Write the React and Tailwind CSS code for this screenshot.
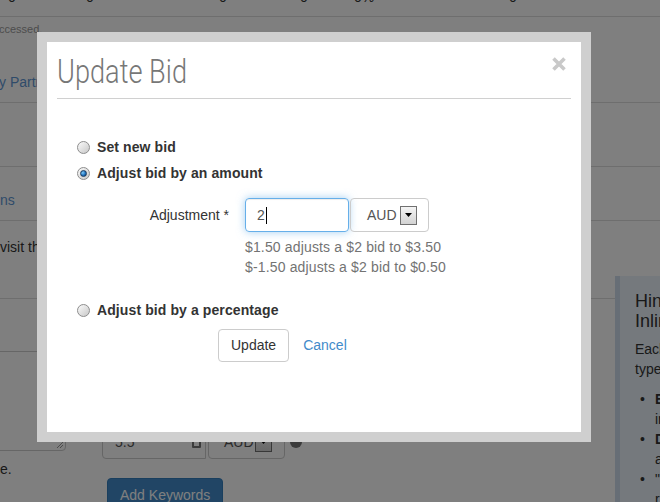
import React from 'react';

const Radio = ({ checked }) => (
    <span className="flex h-[13px] w-[13px] shrink-0 items-center justify-center rounded-full border border-[#8d8d8d] bg-linear-to-br from-[#fbfbfb] to-[#c8c8c8]">
        {checked && (
            <span className="h-[7px] w-[7px] rounded-full border border-[#1c3c5e] bg-[radial-gradient(circle_at_35%_35%,#7cc8f7,#1a6bb8_60%,#0c3a6a)]" />
        )}
    </span>
)

const RadioRow = ({ checked, label }) => (
    <div className="flex h-[26px] items-center gap-[7px]">
        <Radio checked={checked} />
        <span className="font-bold tracking-[0.1px] text-[#333]">{label}</span>
    </div>
)

const DropArrow = () => (
    <span className="flex h-[19px] w-[17px] items-center justify-center border border-[#707070] bg-linear-to-b from-[#f4f4f4] to-[#d3d3d3]">
        <svg width="7" height="4" viewBox="0 0 7 4">
            <path d="M0 0h7L3.5 4z" fill="#000" />
        </svg>
    </span>
)

const UpdateBidModal = () => (
    <div className="absolute left-[37px] top-[32px] h-[410px] w-[554px] bg-[#cfcfcf] p-[10px]">
        <div className="h-full bg-white px-[10px]">
            <div className="flex items-start justify-between border-b border-[#d0d0d0] pb-[7px] pt-[9px]">
                <h4 className="origin-left scale-x-[0.8] whitespace-nowrap font-['Roboto',sans-serif] text-[34px] font-light leading-[40px] text-[#777]">
                    Update Bid
                </h4>
                <svg className="mr-[5px] mt-[6px]" width="14" height="14" viewBox="0 0 14 14">
                    <path d="M1.5 1.5L12.5 12.5M12.5 1.5L1.5 12.5" stroke="#c9c9c9" strokeWidth="3.6" />
                </svg>
            </div>

            <div className="pl-[20px] pt-[35px]">
                <RadioRow label="Set new bid" />
                <RadioRow checked label="Adjust bid by an amount" />

                <div className="mt-[12px] flex items-center">
                    <label className="w-[152px] text-right text-[#333]">Adjustment *</label>
                    <div className="ml-[16px] flex h-[34px] w-[104px] items-center rounded-[4px] border border-[#66afe9] pl-[11px] text-[#555] shadow-[inset_0_1px_1px_rgba(0,0,0,0.075),0_0_8px_rgba(102,175,233,0.6)]">
                        <span>2</span>
                        <span className="ml-[1px] h-[17px] w-[1px] bg-black" />
                    </div>
                    <div className="ml-[1px] flex h-[34px] w-[79px] items-center gap-[3px] rounded-[4px] border border-[#ccc] pl-[16px] text-[#555]">
                        <span>AUD</span>
                        <DropArrow />
                    </div>
                </div>

                <div className="ml-[168px] mt-[5px] leading-[20px] tracking-[0.15px] text-[#737373]">
                    <div>$1.50 adjusts a $2 bid to $3.50</div>
                    <div>$-1.50 adjusts a $2 bid to $0.50</div>
                </div>

                <div className="mt-[20px]">
                    <RadioRow label="Adjust bid by a percentage" />
                </div>

                <div className="ml-[141px] mt-[6px] flex items-center">
                    <button className="h-[33px] rounded-[4px] border border-[#ccc] bg-white px-[12px] text-[#333]">Update</button>
                    <a className="ml-[14px] text-[#428bca]">Cancel</a>
                </div>
            </div>
        </div>
    </div>
)

const App = () => {
    return (
        <div className="relative h-[502px] w-[660px] overflow-hidden bg-white font-['Liberation_Sans',Arial,sans-serif] text-[14px] text-[#333]">
            {/* page behind the overlay */}
            <div className="h-[17px] overflow-hidden border-b border-[#ddd]">
                <div className="-mt-[13px] flex whitespace-nowrap leading-[20px]">
                    <span className="ml-[8px] w-[78px]">0</span>
                    <span className="w-[133px]">0</span>
                    <span className="w-[81px]">0</span>
                    <span className="w-[54px]">0</span>
                    <span className="w-[155px]">0%</span>
                    <span>0</span>
                </div>
            </div>
            <div className="h-[86px] whitespace-nowrap border-b border-[#ddd] pt-[5px]">
                <div className="-ml-[1px] text-[11px] leading-[14px] text-[#9a9a9a]">ccessed.</div>
                <div className="-ml-[1px] mt-[36px] leading-[20px] text-[#5f97d4]">y Partners</div>
            </div>
            <div className="h-[64px] border-b border-[#ddd]" />
            <div className="h-[54px] border-b border-[#ddd] pt-[23px] leading-[20px] text-[#5f97d4]">ns</div>

            <div className="flex">
                <div className="w-[615px] shrink-0">
                    <div className="h-[78px] whitespace-nowrap border-b border-[#ddd] pt-[16px] leading-[20px]">visit the</div>
                    <div className="flex">
                        <div className="w-[66px] shrink-0">
                            <div className="relative -ml-[10px] mt-[52px] h-[100px] w-[76px] rounded-[4px] border border-[#ccc]">
                                <svg className="absolute bottom-[1px] right-[1px]" width="9" height="9" viewBox="0 0 9 9">
                                    <path d="M8 2L2 8M8 5L5 8" stroke="#999" strokeWidth="1" />
                                </svg>
                            </div>
                            <div className="mt-[8px] leading-[20px]">e.</div>
                        </div>
                        <div className="ml-[36px]">
                            <div className="mt-[126px] flex items-center">
                                <div className="flex h-[34px] w-[104px] items-center rounded-l-[4px] border border-[#ccc] pl-[12px] pr-[4px] text-[#555]">
                                    <span className="flex-1">5.5</span>
                                    <span className="h-[11px] w-[9px] rounded-[1px] border-2 border-[#777]" />
                                </div>
                                <div className="ml-[2px] flex h-[34px] w-[77px] items-center gap-[1px] rounded-[4px] border border-[#ccc] pl-[15px] text-[#555]">
                                    <span>AUD</span>
                                    <DropArrow />
                                </div>
                                <span className="ml-[5px] h-[12px] w-[12px] rounded-full bg-[#777]" />
                            </div>
                            <button className="ml-[5px] mt-[19px] h-[34px] whitespace-nowrap rounded-[4px] border border-[#357ebd] bg-[#428bca] px-[12px] text-white">
                                Add Keywords
                            </button>
                        </div>
                    </div>
                </div>
                <div className="mt-[55px] h-[300px] w-[300px] shrink-0 whitespace-nowrap border-l-[5px] border-[#cedcec] bg-[#eaf2fa] pl-[15px] pt-[15px]">
                    <div className="text-[18px] leading-[20px] text-[#333]">
                        Hints
                        <br />
                        Inline editing
                    </div>
                    <p className="mt-[8px] leading-[20px]">
                        Each
                        <br />
                        type
                    </p>
                    <ul className="mt-[10px] leading-[20px]">
                        <li className="flex">
                            <span className="w-[20px] pl-[5px]">•</span>
                            <span><b>Edit</b><br />in</span>
                        </li>
                        <li className="flex">
                            <span className="w-[20px] pl-[5px]">•</span>
                            <span><b>Delete</b><br />a</span>
                        </li>
                        <li className="flex">
                            <span className="w-[20px] pl-[5px]">•</span>
                            <span>"<br />r</span>
                        </li>
                    </ul>
                </div>
            </div>

            <div className="absolute inset-0 bg-black/50" />
            <UpdateBidModal />
        </div>
    )
}

export default App;
